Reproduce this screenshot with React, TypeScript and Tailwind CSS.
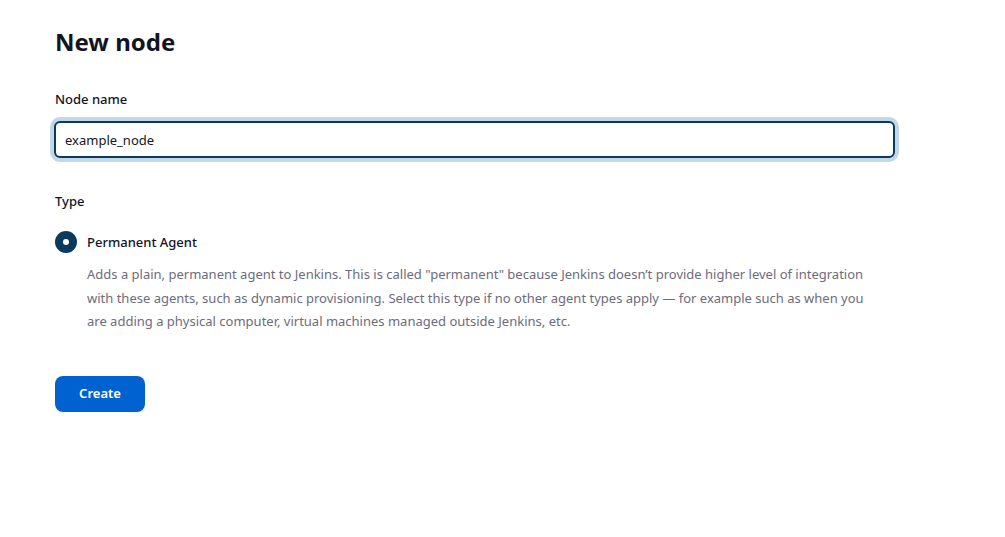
import React from "react";

export default function App() {
  return (
    <div className="min-h-[537px] w-[1005px] bg-white text-[#14141f]" style={{ fontFamily: '"Noto Sans", "Open Sans", sans-serif' }}>
      <div className="w-[893px] pl-[55px] pt-[26px]">
        <h1 className="text-[24px] font-bold leading-[32px]">New node</h1>
        <div className="mt-[31px] text-[13px] font-medium leading-[20px]">Node name</div>
        <input
          className="mt-[12px] -ml-[1px] block h-[37px] w-[841px] rounded-[6px] border-2 border-[#0b3a5c] bg-white px-[9px] text-[13px] text-[#14141f] shadow-[0_0_0_4px_#c1d8e8] outline-none"
          defaultValue="example_node"
          style={{ fontFamily: '"Noto Sans", "Open Sans", sans-serif' }}
        />
        <div className="mt-[33px] text-[13px] font-medium leading-[20px]">Type</div>
        <div className="mt-[20px] flex items-center gap-[10px]">
          <div className="flex h-[22px] w-[22px] items-center justify-center rounded-full bg-[#0b3a5c]">
            <div className="h-[6px] w-[6px] rounded-full bg-white" />
          </div>
          <div className="text-[13px] font-medium leading-[20px]">Permanent Agent</div>
        </div>
        <p className="mt-[10px] pl-[32px] pr-[14px] text-[13px] leading-[23.5px] text-[#6d6b7e]">
          Adds a plain, permanent agent to Jenkins. This is called "permanent" because Jenkins doesn’t provide higher level of integration with these agents, such as dynamic provisioning. Select this type if no other agent types apply — for example such as when you are adding a physical computer, virtual machines managed outside Jenkins, etc.
        </p>
        <button className="mt-[42px] flex h-[36px] w-[90px] items-center justify-center rounded-[8px] bg-[#0062d1] text-[13px] font-semibold text-white">
          Create
        </button>
      </div>
    </div>
  );
}
